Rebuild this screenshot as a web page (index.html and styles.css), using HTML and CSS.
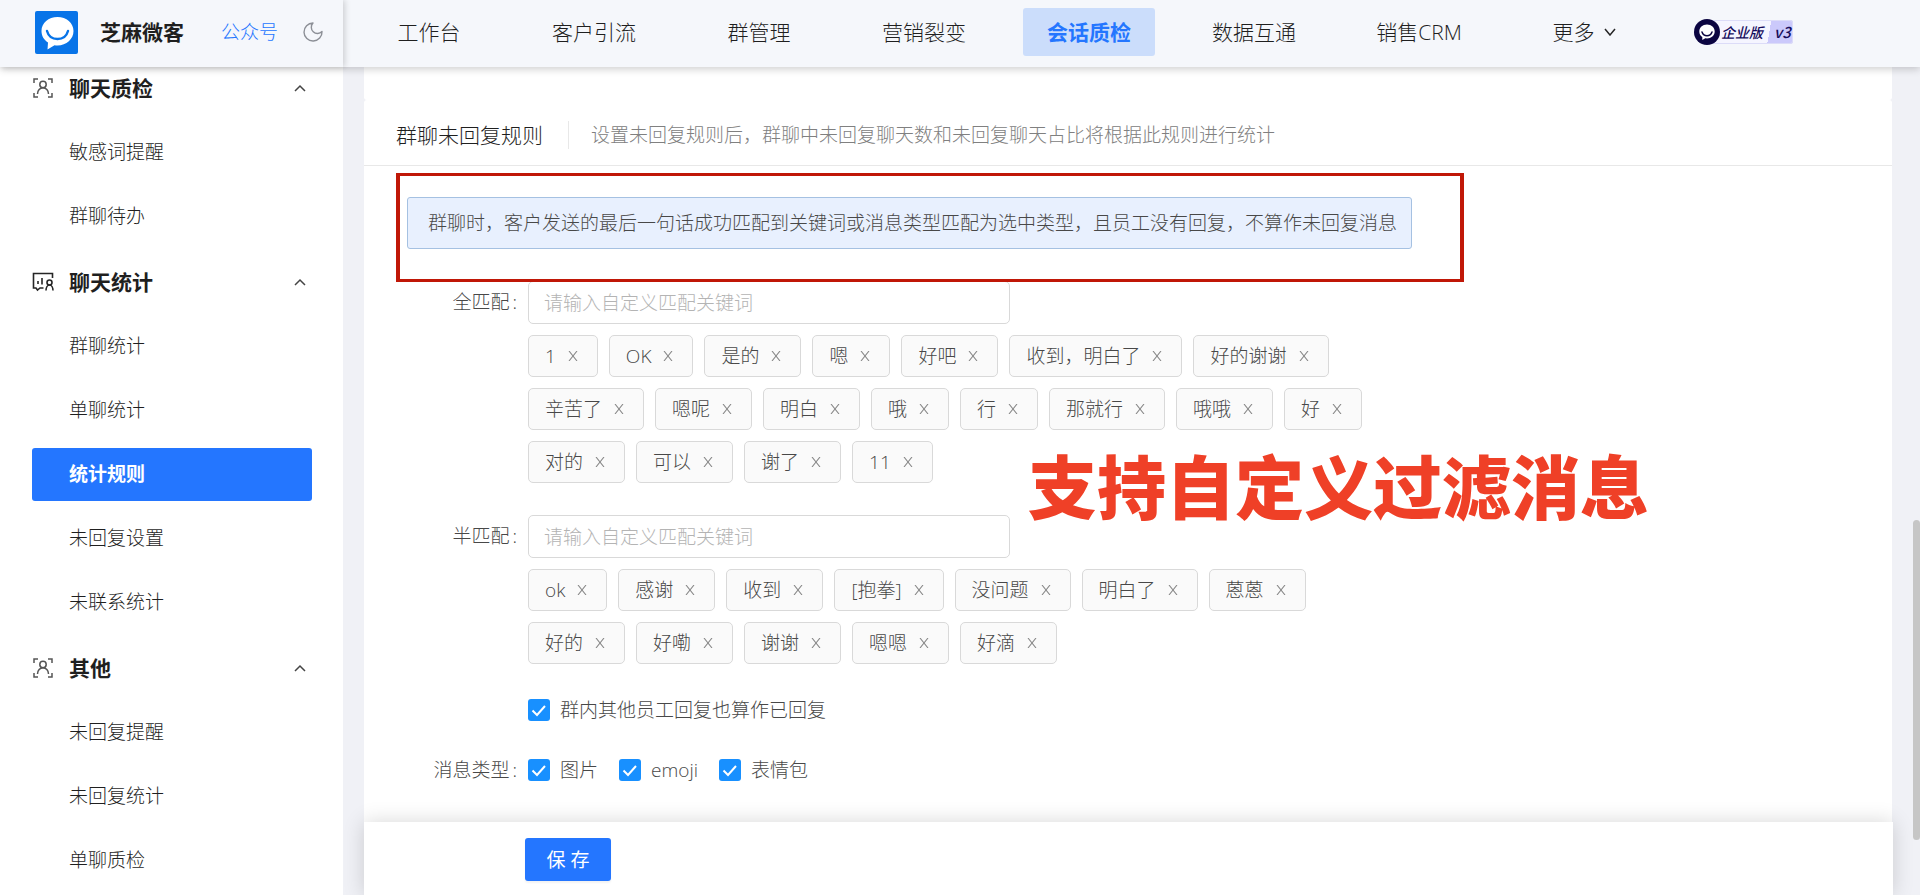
FILE: index.html
```
<!DOCTYPE html>
<html lang="zh-CN">
<head>
<meta charset="utf-8">
<meta name="viewport" content="width=device-width, initial-scale=1">
<title>芝麻微客 - 统计规则</title>
<link rel="stylesheet" href="styles.css">
</head>
<body>
<svg class="sprite" aria-hidden="true">
  <symbol id="icon-scan" viewBox="0 0 20 20">
    <path d="M1 5V1h4M15 1h4v4M19 15v4h-4M5 19H1v-4"/>
    <circle cx="10" cy="6.500" r="3.200"/>
    <path d="M4.500 16c0-3.500 2.500-6.200 5.500-6.200s5.500 2.700 5.500 6.200"/>
  </symbol>
  <symbol id="icon-stats" viewBox="0 0 22 20">
    <path d="M20.500 6V1.500H1.500v14.500H4l1.500 2L8 16h3.500"/>
    <path d="M6 9V12M10 6v6.500"/>
    <circle cx="17.500" cy="10.500" r="2.500"/>
    <path d="M14 18.500c0-3 1.500-5.500 3.500-5.500s3.500 2.500 3.500 5.500"/>
  </symbol>
  <symbol id="icon-up" viewBox="0 0 12 8"><path d="M1 7l5-5 5 5"/></symbol>
  <symbol id="icon-close" viewBox="0 0 10 10"><path d="M1 0l8 10M9 0L1 10"/></symbol>
</svg>

<header class="header">
  <div class="brand">
    <svg class="brand-logo" viewBox="0 0 43 43" aria-hidden="true">
      <rect width="43" height="43" rx="2" fill="#0874e8"/>
      <path d="M22.500 6C13.500 6 6.500 12 6.500 20c0 5 2.500 9 6.500 11.500l-.5 7 7-4.200c1 .2 2 .2 3 .2 9 0 16-6.500 16-14.500S31.500 6 22.500 6z" fill="#fff"/>
      <path d="M12 20c1.500 5.500 5.500 8 10.500 8s9-2.500 10.500-8" fill="none" stroke="#0874e8" stroke-width="2.400" stroke-linecap="round"/>
    </svg>
    <strong class="brand-name">芝麻微客</strong>
    <a class="brand-link" href="#">公众号</a>
    <button class="theme" type="button" aria-label="切换主题">
      <svg viewBox="0 0 20 20" width="20" height="20"><path d="M10 1A9 9 0 1 0 19 9.500 6 6 0 1 1 10 1z" fill="none" stroke="#8c8f96" stroke-width="1.400" stroke-linejoin="round"/></svg>
    </button>
  </div>
  <nav class="nav">
    <a href="#">工作台</a>
    <a href="#">客户引流</a>
    <a href="#">群管理</a>
    <a href="#">营销裂变</a>
    <a class="is-active" href="#">会话质检</a>
    <a href="#">数据互通</a>
    <a href="#">销售CRM</a>
    <a href="#">更多<svg class="more" viewBox="0 0 12 8" aria-hidden="true"><path d="M1 1l5 6 5-6"/></svg></a>
  </nav>
  <div class="plan">
    <svg class="plan-logo" viewBox="0 0 26 26" aria-hidden="true">
      <circle cx="13" cy="13" r="13" fill="#0b0541"/>
      <path d="M13 5.500c-4.500 0-7.700 3-7.700 7 0 2.400 1.100 4.200 3 5.500v3l3-1.700c5 .8 9.400-2.300 9.400-6.800 0-4-3.200-7-7.700-7z" fill="#fff"/>
      <path d="M8 13c1 2.700 2.700 3.800 5 3.800s4-1.100 5-3.800" fill="none" stroke="#0b0541" stroke-width="1.500" stroke-linecap="round"/>
    </svg>
    <span class="plan-name">企业版</span>
    <span class="plan-version">v3</span>
  </div>
</header>

<div class="body">
  <aside class="sidebar">
    <section class="group">
      <button class="group-title" type="button"><svg class="group-icon soft"><use href="#icon-scan"/></svg><span>聊天质检</span><svg class="arrow"><use href="#icon-up"/></svg></button>
      <a href="#">敏感词提醒</a>
      <a href="#">群聊待办</a>
    </section>
    <section class="group">
      <button class="group-title" type="button"><svg class="group-icon"><use href="#icon-stats"/></svg><span>聊天统计</span><svg class="arrow"><use href="#icon-up"/></svg></button>
      <a href="#">群聊统计</a>
      <a href="#">单聊统计</a>
      <a class="is-active" href="#">统计规则</a>
      <a href="#">未回复设置</a>
      <a href="#">未联系统计</a>
    </section>
    <section class="group">
      <button class="group-title" type="button"><svg class="group-icon soft"><use href="#icon-scan"/></svg><span>其他</span><svg class="arrow"><use href="#icon-up"/></svg></button>
      <a href="#">未回复提醒</a>
      <a href="#">未回复统计</a>
      <a href="#">单聊质检</a>
    </section>
  </aside>

  <main class="main">
    <div class="card card-prev"></div>
    <section class="card card-rules">
      <div class="card-head">
        <h2>群聊未回复规则</h2>
        <p>设置未回复规则后，群聊中未回复聊天数和未回复聊天占比将根据此规则进行统计</p>
      </div>
      <form class="form" id="rules">
        <div class="notice-wrap"><p class="notice">群聊时，客户发送的最后一句话成功匹配到关键词或消息类型匹配为选中类型，且员工没有回复，不算作未回复消息</p></div>

        <div class="row">
          <label class="row-label" for="full">全匹配<i>:</i></label>
          <div class="row-body">
            <input class="text" id="full" type="text" placeholder="请输入自定义匹配关键词">
            <ul class="tags">
              <li>1<button type="button" aria-label="删除"><svg><use href="#icon-close"/></svg></button></li>
              <li>OK<button type="button" aria-label="删除"><svg><use href="#icon-close"/></svg></button></li>
              <li>是的<button type="button" aria-label="删除"><svg><use href="#icon-close"/></svg></button></li>
              <li>嗯<button type="button" aria-label="删除"><svg><use href="#icon-close"/></svg></button></li>
              <li>好吧<button type="button" aria-label="删除"><svg><use href="#icon-close"/></svg></button></li>
              <li>收到，明白了<button type="button" aria-label="删除"><svg><use href="#icon-close"/></svg></button></li>
              <li>好的谢谢<button type="button" aria-label="删除"><svg><use href="#icon-close"/></svg></button></li>
              <li>辛苦了<button type="button" aria-label="删除"><svg><use href="#icon-close"/></svg></button></li>
              <li>嗯呢<button type="button" aria-label="删除"><svg><use href="#icon-close"/></svg></button></li>
              <li>明白<button type="button" aria-label="删除"><svg><use href="#icon-close"/></svg></button></li>
              <li>哦<button type="button" aria-label="删除"><svg><use href="#icon-close"/></svg></button></li>
              <li>行<button type="button" aria-label="删除"><svg><use href="#icon-close"/></svg></button></li>
              <li>那就行<button type="button" aria-label="删除"><svg><use href="#icon-close"/></svg></button></li>
              <li>哦哦<button type="button" aria-label="删除"><svg><use href="#icon-close"/></svg></button></li>
              <li>好<button type="button" aria-label="删除"><svg><use href="#icon-close"/></svg></button></li>
              <li>对的<button type="button" aria-label="删除"><svg><use href="#icon-close"/></svg></button></li>
              <li>可以<button type="button" aria-label="删除"><svg><use href="#icon-close"/></svg></button></li>
              <li>谢了<button type="button" aria-label="删除"><svg><use href="#icon-close"/></svg></button></li>
              <li>11<button type="button" aria-label="删除"><svg><use href="#icon-close"/></svg></button></li>
            </ul>
          </div>
        </div>

        <div class="row">
          <label class="row-label" for="half">半匹配<i>:</i></label>
          <div class="row-body">
            <input class="text" id="half" type="text" placeholder="请输入自定义匹配关键词">
            <ul class="tags">
              <li>ok<button type="button" aria-label="删除"><svg><use href="#icon-close"/></svg></button></li>
              <li>感谢<button type="button" aria-label="删除"><svg><use href="#icon-close"/></svg></button></li>
              <li>收到<button type="button" aria-label="删除"><svg><use href="#icon-close"/></svg></button></li>
              <li>[抱拳]<button type="button" aria-label="删除"><svg><use href="#icon-close"/></svg></button></li>
              <li>没问题<button type="button" aria-label="删除"><svg><use href="#icon-close"/></svg></button></li>
              <li>明白了<button type="button" aria-label="删除"><svg><use href="#icon-close"/></svg></button></li>
              <li>蒽蒽<button type="button" aria-label="删除"><svg><use href="#icon-close"/></svg></button></li>
              <li>好的<button type="button" aria-label="删除"><svg><use href="#icon-close"/></svg></button></li>
              <li>好嘞<button type="button" aria-label="删除"><svg><use href="#icon-close"/></svg></button></li>
              <li>谢谢<button type="button" aria-label="删除"><svg><use href="#icon-close"/></svg></button></li>
              <li>嗯嗯<button type="button" aria-label="删除"><svg><use href="#icon-close"/></svg></button></li>
              <li>好滴<button type="button" aria-label="删除"><svg><use href="#icon-close"/></svg></button></li>
            </ul>
          </div>
        </div>

        <div class="row row-checks">
          <span class="row-label"></span>
          <div class="checks">
            <label><input type="checkbox" checked>群内其他员工回复也算作已回复</label>
          </div>
        </div>

        <div class="row row-checks" role="group" aria-labelledby="types">
          <span class="row-label" id="types">消息类型<i>:</i></span>
          <div class="checks">
            <label><input type="checkbox" checked>图片</label>
            <label><input type="checkbox" checked>emoji</label>
            <label><input type="checkbox" checked>表情包</label>
          </div>
        </div>
      </form>
      <div class="mark-box"></div>
      <strong class="mark-text">支持自定义过滤消息</strong>
    </section>
    <footer class="footer"><button class="save" type="submit" form="rules">保 存</button></footer>
    <div class="scroll-thumb"></div>
  </main>
</div>
</body>
</html>
```

FILE: styles.css
```
* { box-sizing: border-box; }

body {
  margin: 0;
  height: 100vh;
  display: flex;
  flex-direction: column;
  overflow: hidden;
  background: #f0f1f6;
  color: #1f1f1f;
  font-family: "Open Sans", "Noto Sans CJK SC", sans-serif;
  font-size: 19px;
  font-weight: 300;
  line-height: 28px;
}

a { color: inherit; text-decoration: none; }
button, input { font: inherit; color: inherit; }
button { padding: 0; border: 0; background: none; cursor: pointer; }
h2, p, ul { margin: 0; padding: 0; }
svg { display: block; flex: none; }
.sprite { position: absolute; width: 0; height: 0; }

/* Header */
.header {
  position: relative;
  z-index: 3;
  flex: none;
  display: flex;
  height: 67px;
  background: #f5f7fb;
  box-shadow: 0 2px 8px rgba(0, 0, 0, .2);
}
.brand {
  flex: none;
  display: flex;
  align-items: center;
  width: 343px;
  padding: 0 20px 3px 35px;
  box-shadow: 2px 0 6px rgba(0, 0, 0, .16);
}
.brand-logo { width: 43px; height: 43px; }
.brand-name { margin-left: 22px; font-size: 21px; font-weight: 700; }
.brand-link { margin-left: 37px; color: #2476ff; }
.theme { margin-left: auto; }

.nav {
  display: flex;
  align-items: center;
  gap: 33px;
  padding: 0 0 3px 20px;
  font-size: 21px;
}
.nav a {
  display: flex;
  align-items: center;
  justify-content: center;
  width: 132px;
  height: 48px;
  border-radius: 3px;
  white-space: nowrap;
}
.nav .is-active { background: #cbddfb; color: #2476ff; font-weight: 700; }
.more { width: 12px; height: 8px; margin-left: 9px; fill: none; stroke: #262626; stroke-width: 1.500; }

.plan {
  position: relative;
  display: flex;
  align-items: center;
  align-self: center;
  height: 24px;
  margin: 0 0 3px 44px;
  border-radius: 12px 3px 3px 12px;
  background: linear-gradient(100deg, #f5f5ff 75%, #cbc9fb 75%);
  box-shadow: inset 0 0 0 1px #dcdcf8;
  color: #150c5c;
  font-family: "Noto Sans CJK SC", sans-serif;
  font-size: 14px;
  font-style: italic;
  font-weight: 500;
  line-height: 24px;
}
.plan-logo { width: 26px; height: 26px; }
.plan-name { width: 54px; padding-left: 1px; }
.plan-version { width: 19px; font-size: 15px; }

/* Sidebar */
.body { flex: 1; display: flex; min-height: 0; }
.sidebar { flex: none; width: 343px; padding: 0 31px 0 32px; background: #fff; overflow: hidden; }
.group { display: flex; flex-direction: column; gap: 11px; margin-bottom: 18px; }
.group-title {
  display: flex;
  align-items: center;
  height: 42px;
  margin-bottom: 6px;
  font-size: 21px;
  font-weight: 700;
}
.group-icon { width: 22px; height: 20px; margin-right: 15px; fill: none; stroke: #262626; stroke-width: 1.600; }
.soft { stroke: #555; stroke-width: 1.500; }
.arrow { width: 12px; height: 8px; margin: 0 6px 0 auto; fill: none; stroke: #444; stroke-width: 1.500; }
.group a { height: 53px; padding-left: 37px; border-radius: 3px; line-height: 53px; }
.group .is-active { background: #2476ff; color: #fff; font-weight: 700; }

/* Main */
.main { position: relative; flex: 1; display: flex; flex-direction: column; min-width: 0; padding: 0 28px 0 21px; }
.card { background: #fff; }
.card-prev { flex: none; height: 33px; border-radius: 0 0 3px 3px; }
.card-rules { position: relative; flex: 1; min-height: 0; border-radius: 3px 3px 0 0; }
.card-head {
  display: flex;
  align-items: center;
  height: 66px;
  padding: 4px 32px 0;
  border-bottom: 1px solid #e8e8e8;
}
.card-head h2 { margin-right: 25px; font-size: 21px; font-weight: 300; }
.card-head p { padding-left: 22px; border-left: 1px solid #e8e8e8; color: #808080; }

.form { color: #484848; }
.notice-wrap { display: flex; padding: 31px 43px 32px; }
.notice {
  width: 1005px;
  padding: 11px 20px;
  border: 1px solid #a5c1e2;
  border-radius: 3px;
  background: #e8f0fe;
  white-space: nowrap;
}

.row { display: flex; margin-bottom: 32px; }
.row-label { flex: none; width: 164px; line-height: 43px; text-align: right; }
.row-label i { margin: 0 11px 0 3px; font-style: normal; }
.row-body { flex: 0 1 860px; }
.text {
  display: block;
  width: 482px;
  height: 43px;
  padding: 0 15px;
  border: 1px solid #d9d9d9;
  border-radius: 5px;
  background: #fff;
}
.text::placeholder { color: #b4b4b4; opacity: 1; }

.tags { display: flex; flex-wrap: wrap; gap: 11px; margin-top: 11px; list-style: none; }
.tags li {
  display: flex;
  align-items: center;
  height: 42px;
  padding: 0 19px 0 16px;
  border: 1px solid #d9d9d9;
  border-radius: 5px;
  background: #fafafa;
}
.tags button { margin-left: 12px; }
.tags svg { width: 10px; height: 10px; fill: none; stroke: #888; stroke-width: 1.100; }

.row-checks { align-items: center; height: 28px; }
.checks { display: flex; gap: 21px; }
.checks label { display: flex; align-items: center; gap: 10px; }
.checks input {
  appearance: none;
  width: 22px;
  height: 22px;
  margin: 0;
  border-radius: 3px;
  background: #1890ff url("data:image/svg+xml,%3Csvg xmlns='http://www.w3.org/2000/svg' viewBox='0 0 22 22'%3E%3Cpath d='M4.500 11.500l4.500 4.500 8-9' fill='none' stroke='white' stroke-width='2'/%3E%3C/svg%3E");
}

.footer {
  position: relative;
  flex: none;
  height: 73px;
  margin-right: -1px;
  padding: 16px 161px;
  background: #fff;
  box-shadow: 0 0 20px rgba(0, 0, 0, .16);
}
.save {
  width: 86px;
  height: 43px;
  border-radius: 3px;
  background: #2476ff;
  color: #fff;
  font-weight: 400;
  box-shadow: 0 2px 2px rgba(0, 0, 0, .05);
}

/* Overlays */
.mark-box { position: absolute; left: 32px; top: 73px; width: 1068px; height: 109px; border: solid #c01707; border-width: 3px 4px; }
.mark-text { position: absolute; left: 664px; top: 337px; color: #ef4027; font-size: 69px; font-weight: 900; line-height: 100px; white-space: nowrap; }
.scroll-thumb { position: absolute; right: 0; top: 453px; width: 7px; height: 320px; border-radius: 4px; background: #c6c6c6; }
```
